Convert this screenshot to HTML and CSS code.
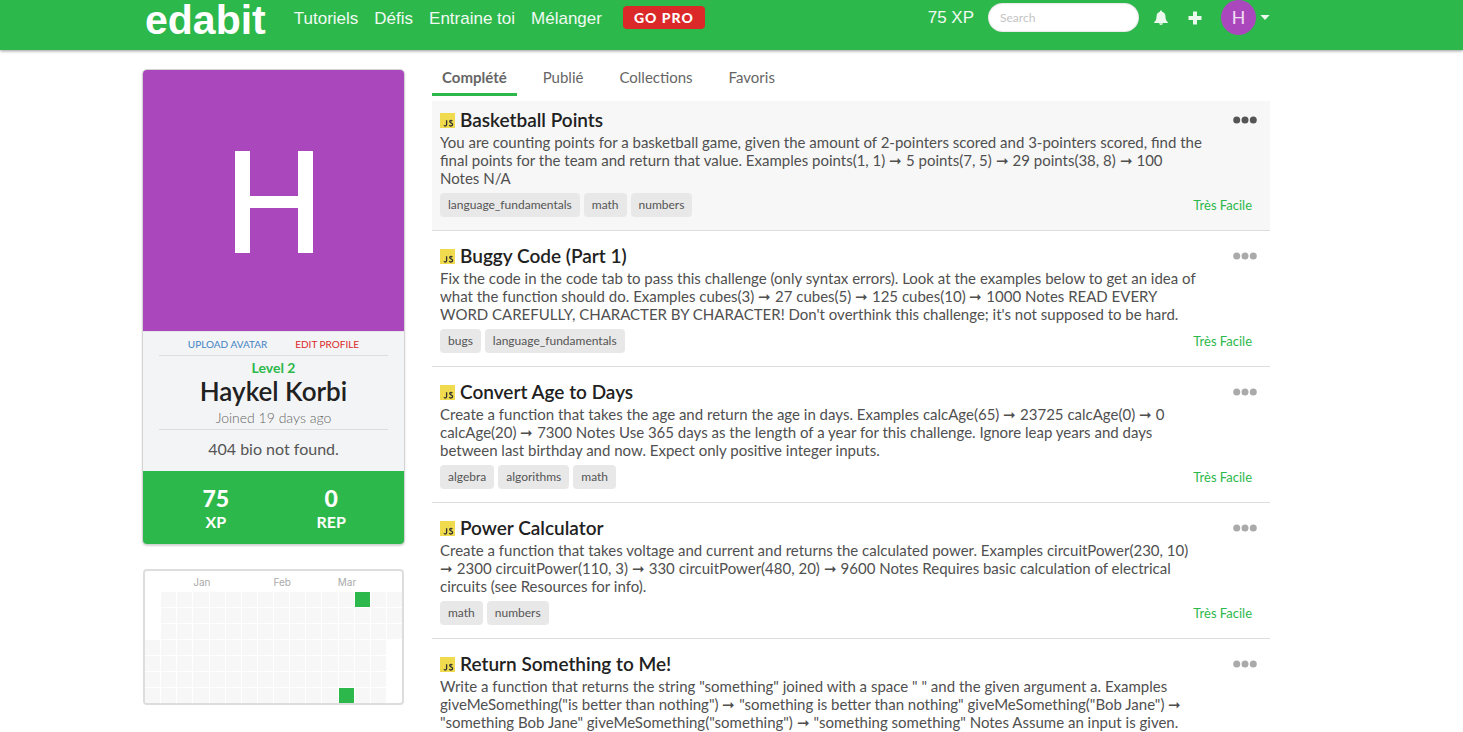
FILE: index.html
```html
<!DOCTYPE html>
<html lang="fr">
<head>
<meta charset="utf-8">
<meta name="viewport" content="width=device-width, initial-scale=1">
<title>Edabit</title>
<link rel="stylesheet" href="styles.css">
</head>
<body>
<svg class="sprite" aria-hidden="true">
  <symbol id="js" viewBox="0 0 15 15">
    <rect width="15" height="15" fill="#f0db4f"/>
    <path d="M6.600 7.200v4.300q0 1.500-1.300 1.500-.9 0-1.300-.8M12.300 8.200q-.5-.7-1.400-.7-1.200 0-1.200 1.100 0 .8 1.300 1.300 1.600.6 1.600 1.700 0 1.400-1.600 1.400-1.200 0-1.800-1" fill="none" stroke="#323330" stroke-width="1.3"/>
  </symbol>
  <symbol id="dots" viewBox="0 0 24 8">
    <circle cx="3.700" cy="4" r="3.500"/><circle cx="12" cy="4" r="3.500"/><circle cx="20.300" cy="4" r="3.500"/>
  </symbol>
</svg>
<header class="topbar">
  <a class="logo" href="#">edabit</a>
  <nav class="nav">
    <a href="#">Tutoriels</a>
    <a href="#">Défis</a>
    <a href="#">Entraine toi</a>
    <a href="#">Mélanger</a>
  </nav>
  <button class="pro" type="button">GO PRO</button>
  <div class="tools">
    <span class="points">75 XP</span>
    <input class="search" type="search" placeholder="Search" aria-label="Search">
    <button class="icon-btn bell" type="button" aria-label="Notifications">
      <svg width="14" height="16" viewBox="0 0 14 16"><path d="M7 0.500c.8 0 1 .5 1 1.200 2.500.6 3.500 2.500 3.500 4.800 0 3 .8 4.500 2.300 5.600v.9H.2v-.9C1.700 11 2.500 9.500 2.500 6.500c0-2.300 1-4.200 3.500-4.800C6 1 6.200.5 7 .5zM5 13.300h4q-.3 1.700-2 1.700t-2-1.700z"/></svg>
    </button>
    <button class="icon-btn plus" type="button" aria-label="Ajouter">
      <svg width="14" height="14" viewBox="0 0 14 14"><path d="M5 .5h4V5h4.500v4H9v4.500H5V9H.5V5H5z"/></svg>
    </button>
    <button class="account" type="button" aria-label="Compte">
      <span class="mini-avatar">H</span>
      <svg width="10" height="5" viewBox="0 0 10 5"><path d="M.3 0h9.400L5 5z"/></svg>
    </button>
  </div>
</header>

<div class="page">
  <aside class="sidebar">
    <section class="card">
      <div class="avatar">
        <svg viewBox="0 0 261 261" role="img" aria-label="H"><path d="M92 81h15v45h48V81h15v102h-15v-45h-48v45H92z" fill="#fff"/></svg>
      </div>
      <div class="card-body">
        <div class="actions"><a class="upload" href="#">UPLOAD AVATAR</a><a class="edit" href="#">EDIT PROFILE</a></div>
        <div class="identity">
          <div class="level">Level 2</div>
          <h1 class="name">Haykel Korbi</h1>
          <div class="joined">Joined 19 days ago</div>
        </div>
        <p class="bio">404 bio not found.</p>
      </div>
      <div class="stats">
        <div class="stat"><b>75</b><span>XP</span></div>
        <div class="stat"><b>0</b><span>REP</span></div>
      </div>
    </section>
    <section class="calendar">
      <div class="months"><span class="jan">Jan</span><span class="feb">Feb</span><span class="mar">Mar</span></div>
      <div class="days" id="days"></div>
    </section>
  </aside>

  <main class="main">
    <nav class="tabs">
      <a class="tab active" href="#">Complété</a>
      <a class="tab" href="#">Publié</a>
      <a class="tab" href="#">Collections</a>
      <a class="tab" href="#">Favoris</a>
    </nav>
    <article class="item hover">
      <div class="head"><h2><svg class="js"><use href="#js"/></svg>Basketball Points</h2><button class="more" type="button" aria-label="Options"><svg><use href="#dots"/></svg></button></div>
      <p>You are counting points for a basketball game, given the amount of 2-pointers scored and 3-pointers scored, find the final points for the team and return that value. Examples points(1, 1) ➞ 5 points(7, 5) ➞ 29 points(38, 8) ➞ 100 Notes N/A</p>
      <div class="foot"><div class="tags"><a href="#">language_fundamentals</a><a href="#">math</a><a href="#">numbers</a></div><span class="difficulty">Très Facile</span></div>
    </article>
    <article class="item">
      <div class="head"><h2><svg class="js"><use href="#js"/></svg>Buggy Code (Part 1)</h2><button class="more" type="button" aria-label="Options"><svg><use href="#dots"/></svg></button></div>
      <p>Fix the code in the code tab to pass this challenge (only syntax errors). Look at the examples below to get an idea of what the function should do. Examples cubes(3) ➞ 27 cubes(5) ➞ 125 cubes(10) ➞ 1000 Notes READ EVERY WORD CAREFULLY, CHARACTER BY CHARACTER! Don't overthink this challenge; it's not supposed to be hard.</p>
      <div class="foot"><div class="tags"><a href="#">bugs</a><a href="#">language_fundamentals</a></div><span class="difficulty">Très Facile</span></div>
    </article>
    <article class="item">
      <div class="head"><h2><svg class="js"><use href="#js"/></svg>Convert Age to Days</h2><button class="more" type="button" aria-label="Options"><svg><use href="#dots"/></svg></button></div>
      <p>Create a function that takes the age and return the age in days. Examples calcAge(65) ➞ 23725 calcAge(0) ➞ 0 calcAge(20) ➞ 7300 Notes Use 365 days as the length of a year for this challenge. Ignore leap years and days between last birthday and now. Expect only positive integer inputs.</p>
      <div class="foot"><div class="tags"><a href="#">algebra</a><a href="#">algorithms</a><a href="#">math</a></div><span class="difficulty">Très Facile</span></div>
    </article>
    <article class="item">
      <div class="head"><h2><svg class="js"><use href="#js"/></svg>Power Calculator</h2><button class="more" type="button" aria-label="Options"><svg><use href="#dots"/></svg></button></div>
      <p>Create a function that takes voltage and current and returns the calculated power. Examples circuitPower(230, 10) ➞ 2300 circuitPower(110, 3) ➞ 330 circuitPower(480, 20) ➞ 9600 Notes Requires basic calculation of electrical circuits (see Resources for info).</p>
      <div class="foot"><div class="tags"><a href="#">math</a><a href="#">numbers</a></div><span class="difficulty">Très Facile</span></div>
    </article>
    <article class="item last">
      <div class="head"><h2><svg class="js"><use href="#js"/></svg>Return Something to Me!</h2><button class="more" type="button" aria-label="Options"><svg><use href="#dots"/></svg></button></div>
      <p>Write a function that returns the string "something" joined with a space " " and the given argument a. Examples giveMeSomething("is better than nothing") ➞ "something is better than nothing" giveMeSomething("Bob Jane") ➞ "something Bob Jane" giveMeSomething("something") ➞ "something something" Notes Assume an input is given.</p>
    </article>
  </main>
</div>
<script src="calendar.js"></script>
</body>
</html>
```

FILE: styles.css
```css
* { box-sizing: border-box; }
body { margin: 0; background: #fff; color: #212121; font: 15px/18px Lato, "Liberation Sans", sans-serif; }
a { color: inherit; text-decoration: none; }
h1, h2, p { margin: 0; }
button { border: 0; padding: 0; background: none; font: inherit; color: inherit; cursor: pointer; }
svg { display: block; }
.sprite { display: none; }

.topbar { display: flex; align-items: flex-start; height: 50px; padding: 0 193px 0 145px; background: #2db84b; color: #f0faf2; box-shadow: 0 1px 3px rgba(0,0,0,.4); font: 17px/37px "Liberation Sans", Arial, sans-serif; }
.logo { color: #fff; font-size: 41px; line-height: 40px; font-weight: bold; }
.nav { display: flex; gap: 16px; margin-left: 28px; }
.pro { margin: 6px 0 0 21px; width: 82px; height: 23px; border-radius: 4px; background: #db2828; color: #fff; font: 900 14px/23px Lato, sans-serif; letter-spacing: 1px; }
.tools { display: flex; align-items: center; height: 35px; margin-left: auto; }
.search { width: 151px; height: 29px; margin: 0 15px 0 14px; padding: 0 12px; border: 0; border-radius: 15px; background: #fff; font: 12px Lato, sans-serif; color: #333; box-shadow: inset 0 0 2px rgba(0,0,0,.3); appearance: none; }
.search::placeholder { color: #c4c4c4; }
.icon-btn svg, .account svg { fill: #eaf8ed; }
.plus { margin-left: 20px; }
.account { display: flex; align-items: center; gap: 4px; margin-left: 19px; }
.mini-avatar { width: 35px; height: 35px; border-radius: 50%; background: #ab47bc; color: #f0dcf3; font: 19px/35px Roboto, sans-serif; text-align: center; }

.page { display: flex; align-items: flex-start; gap: 27px; padding: 19px 193px 0 142px; }
.sidebar { flex: 0 0 263px; }
.card { border: 1px solid #d4d4d5; border-radius: 5px; overflow: hidden; background: #f3f4f5; text-align: center; box-shadow: 0 1px 2px #d4d4d5; }
.avatar { background: #ab47bc; }
.card-body { padding: 5px 16px 12px; border-top: 1px solid #e6e6e8; }
.actions { display: flex; justify-content: center; gap: 28px; padding-bottom: 4px; font-size: 10px; line-height: 14px; }
.upload { color: #4183c4; }
.edit { color: #db2828; }
.identity { border: solid #dddedf; border-width: 1px 0; padding: 3px 0 1px; }
.level { color: #2db84b; font-size: 14px; line-height: 18px; font-weight: bold; }
.name { font-size: 26px; line-height: 28px; font-weight: 600; }
.joined { margin-top: 3px; color: #666; font-size: 14px; line-height: 20px; font-weight: 300; }
.bio { padding-top: 9px; color: #555; font-size: 16px; line-height: 20px; }
.stats { display: flex; padding: 14px 15px 12px; background: #2db84b; color: #fff; font-weight: bold; }
.stat { flex: 1; display: flex; flex-direction: column; }
.stat b { font-size: 23px; line-height: 27px; }
.stat span { font-size: 16px; line-height: 20px; }

.calendar { margin: 24px 1px 0; border: 2px solid #ddd; border-radius: 4px; overflow: hidden; color: #aaa; font: 10px/14px Inter, sans-serif; }
.months { display: grid; grid-template-columns: repeat(16, minmax(0, 1fr)); padding: 4px 0 3px; }
.jan { grid-column: 4; }
.feb { grid-column: 9; }
.mar { grid-column: 13; }
.days { display: grid; grid-template: repeat(7, 15px) / repeat(16, minmax(0, 1fr)); grid-auto-flow: column; gap: 1px; }
.day { background: #f7f7f7; }
.day.empty { background: none; }
.day.done { background: #2db84b; }

.main { flex: 1; min-width: 0; }
.tabs { display: flex; gap: 16px; margin-bottom: 5px; color: #666; line-height: 16px; }
.tab { padding: 0 10px 8px; border-bottom: 3px solid transparent; }
.tab.active { font-weight: bold; border-color: #2db84b; }
.item { margin-top: 6px; padding: 8px 8px 13px; border-bottom: 1px solid #ddd; }
.item.hover { margin-top: 0; background: #f7f7f7; }
.item.last { border: 0; padding-bottom: 0; }
.head, .foot { display: flex; justify-content: space-between; align-items: center; }
.item h2 { display: flex; align-items: center; gap: 5px; font-size: 19px; line-height: 22px; font-weight: 600; }
.js { width: 15px; height: 15px; }
.item p { max-width: 762px; margin-top: 2px; color: #505050; }
.foot { margin-top: 6px; }
.tags { display: flex; gap: 4px; }
.tags a { padding: 0 8px; border-radius: 4px; background: #e8e8e8; color: #555; font-size: 12px; line-height: 24px; }
.more { margin-right: 5px; }
.more svg { width: 24px; height: 8px; fill: #aaa; }
.difficulty { margin-right: 10px; color: #2db84b; font-size: 13px; }
.hover .more svg { fill: #555; }
```

FILE: calendar.js
```js
// Sixteen weeks, one column each; the first and last weeks are partial.
const days = document.getElementById("days");
const done = [13 * 7, 12 * 7 + 6];
for (let i = 0; i < 16 * 7; i++) {
  const day = document.createElement("span");
  day.className = "day";
  if (i < 3 || i > 15 * 7 + 2) day.classList.add("empty");
  if (done.includes(i)) day.classList.add("done");
  days.append(day);
}
```
